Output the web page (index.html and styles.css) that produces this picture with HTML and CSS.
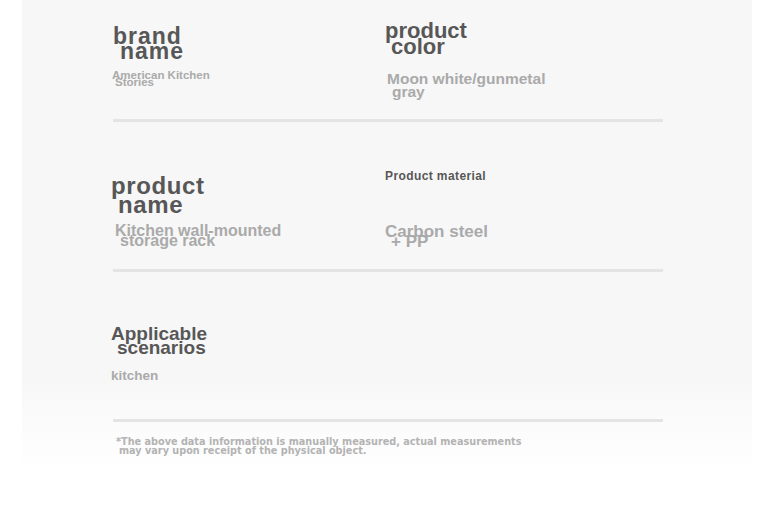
FILE: index.html
```html
<!DOCTYPE html>
<html lang="en">
<head>
    <meta charset="UTF-8">
    <meta name="viewport" content="width=device-width, initial-scale=1.0">
    <title>Product parameters</title>
    <link rel="stylesheet" href="styles.css">
</head>
<body>

    <div class="spec-card">
        <!-- Row 1 -->
        <div class="spec-row row-one">
            <div class="spec-cell">
                <h3 class="label label-brand">brand name</h3>
                <p class="value value-brand">American Kitchen Stories</p>
            </div>
            <div class="spec-cell">
                <h3 class="label label-color">product color</h3>
                <p class="value value-color">Moon white/gunmetal gray</p>
            </div>
        </div>
        <div class="divider"></div>

        <!-- Row 2 -->
        <div class="spec-row row-two">
            <div class="spec-cell">
                <h3 class="label label-name">product name</h3>
                <p class="value value-name">Kitchen wall-mounted storage rack</p>
            </div>
            <div class="spec-cell">
                <h3 class="label label-material">Product material</h3>
                <p class="value value-material">Carbon steel + PP</p>
            </div>
        </div>
        <div class="divider"></div>

        <!-- Row 3 -->
        <div class="spec-row row-three">
            <div class="spec-cell">
                <h3 class="label label-scene">Applicable scenarios</h3>
                <p class="value value-scene">kitchen</p>
            </div>
        </div>
        <div class="divider"></div>

        <p class="note">*The above data information is manually measured, actual measurements may vary upon receipt of the physical object.</p>
    </div>

</body>
</html>
```

FILE: styles.css
```css
/* Global Styles */
* {
    margin: 0;
    padding: 0;
    box-sizing: border-box;
}

body {
    font-family: 'Liberation Sans', Arial, sans-serif;
    background: #fff;
    height: 528px;
    overflow: hidden;
}

/* Card */
.spec-card {
    margin: 0 24px 0 22px;
    padding-left: 89px;
    padding-right: 89px;
    height: 480px;
    background: linear-gradient(to bottom, #f7f7f7 0, #f7f7f7 380px, #fff 470px);
}

.spec-row {
    display: grid;
    grid-template-columns: 274px 1fr;
}

.row-one {
    height: 119px;
}

.row-two {
    height: 147px;
}

.row-three {
    height: 147px;
}

.spec-cell {
    display: flex;
    flex-direction: column;
}

/* Labels */
.label {
    color: #575757;
    font-weight: bold;
    padding-left: 7px;
    text-indent: -7px;
    width: 130px;
}

.label-brand {
    margin-top: 29px;
    margin-left: 2px;
    font-size: 23px;
    line-height: 15px;
    letter-spacing: 1px;
}

.label-color {
    margin-top: 23px;
    font-size: 22px;
    line-height: 16px;
    padding-left: 6px;
    text-indent: -6px;
}

.label-name {
    margin-top: 54px;
    font-size: 24px;
    line-height: 19px;
    letter-spacing: 0.6px;
}

.label-material {
    margin-top: 47px;
    font-size: 12px;
    line-height: 14px;
    letter-spacing: 0.4px;
    width: 200px;
}

.label-scene {
    margin-top: 55px;
    font-size: 19px;
    line-height: 14px;
    padding-left: 6px;
    text-indent: -6px;
}

/* Values */
.value {
    color: #aaa;
    font-weight: bold;
    padding-left: 5px;
    text-indent: -5px;
}

.value-brand {
    margin-top: 13px;
    margin-left: 1px;
    font-size: 11.5px;
    line-height: 7px;
    width: 110px;
    padding-left: 3px;
    text-indent: -3px;
}

.value-color {
    margin-top: 17px;
    margin-left: 2px;
    font-size: 15.5px;
    line-height: 13px;
    width: 170px;
}

.value-name {
    margin-top: 12px;
    margin-left: 4px;
    font-size: 16px;
    line-height: 10px;
    width: 180px;
}

.value-material {
    margin-top: 44px;
    font-size: 17px;
    line-height: 10px;
    width: 115px;
    padding-left: 6px;
    text-indent: -6px;
}

.value-scene {
    margin-top: 13px;
    font-size: 13.5px;
    line-height: 15px;
}

/* Divider */
.divider {
    height: 3px;
    margin-left: 2px;
    width: 550px;
    background: #e4e4e4;
}

/* Footnote */
.note {
    margin-top: 15px;
    margin-left: 5px;
    width: 420px;
    color: #b3b3b3;
    font-family: 'DejaVu Sans', sans-serif;
    font-weight: bold;
    font-size: 9.7px;
    line-height: 9px;
    padding-left: 3px;
    text-indent: -3px;
}
```
